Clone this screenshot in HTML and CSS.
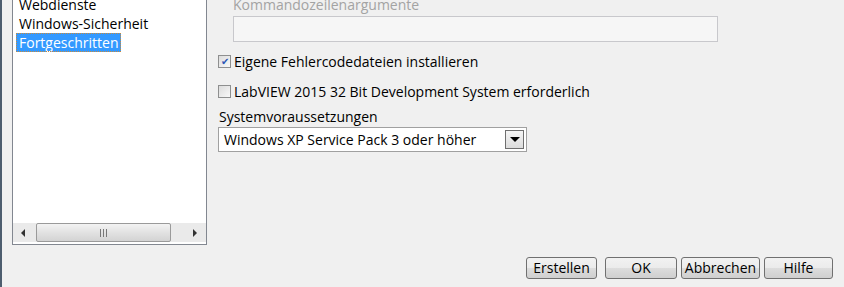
FILE: index.html
```html
<!DOCTYPE html>
<html>
<head>
<meta charset="UTF-8">
<title>Build-Spezifikation</title>
<link rel="stylesheet" href="styles.css">
</head>
<body>
<div id="win">
	<div class="main">
		<div class="side">
			<ul class="list">
				<li>Webdienste</li>
				<li>Windows-Sicherheit</li>
				<li class="sel"><span>Fortgeschritten</span></li>
			</ul>
			<div class="hscroll">
				<div class="arr left"></div>
				<div class="thumb"><span class="grip"></span></div>
				<div class="arr right"></div>
			</div>
		</div>

		<div class="panel">
			<div class="dis">Kommandozeilenargumente</div>
			<div class="field"></div>

			<label class="chk"><span class="box on">&#10004;</span>Eigene Fehlercodedateien installieren</label>
			<label class="chk second"><span class="box"></span>LabVIEW 2015 32 Bit Development System erforderlich</label>

			<div class="lbl">Systemvoraussetzungen</div>
			<div class="combo">
				<span>Windows XP Service Pack 3 oder höher</span>
				<div class="drop"><span class="tri"></span></div>
			</div>
		</div>
	</div>

	<div class="btns">
		<div class="btn b1">Erstellen</div>
		<div class="btn b2">OK</div>
		<div class="btn b3">Abbrechen</div>
		<div class="btn b4">Hilfe</div>
	</div>
</div>
</body>
</html>
```
FILE: styles.css
```css
body, div, ul, li{
	margin : 0;
	padding : 0;
}
body{
	background : #f0f0f0;
	font-family : "Open Sans", "Noto Sans", sans-serif;
	font-size : 14px;
	color : #000;
	overflow : hidden;
}
#win{
	width : 842px;
	height : 287px;
	border-left : 2px solid #4d5d6e;
	display : flex;
	flex-direction : column;
}
.main{
	display : flex;
	height : 245px;
}
/* 왼쪽 목록 */
.side{
	margin-left : 10px;
	margin-top : -8px;
	width : 193px;
	height : 251px;
	border : 1px solid #828790;
	background : #fff;
	display : flex;
	flex-direction : column;
}
.list{
	list-style : none;
	flex : 1;
	padding : 2px 0 0 3px;
}
.list li{
	height : 19px;
	line-height : 19px;
	padding-left : 3px;
}
.list .sel{
	padding-left : 0;
}
.list .sel span{
	display : inline-block;
	background : #3399ff;
	color : #fff;
	padding : 0 3px;
	outline : 1px dotted #c98a3a;
	outline-offset : -1px;
}
.hscroll{
	height : 19px;
	margin-bottom : 2px;
	display : flex;
	background : #eaeaea;
}
.arr{
	width : 23px;
	position : relative;
}
.arr.right{
	width : 35px;
}
.arr::after{
	content : "";
	position : absolute;
	top : 6px;
	border-top : 4px solid transparent;
	border-bottom : 4px solid transparent;
}
.arr.left::after{
	left : 8px;
	border-right : 4px solid #333;
}
.arr.right::after{
	left : 22px;
	border-left : 4px solid #333;
}
.thumb{
	flex : 1;
	border : 1px solid #9a9a9a;
	border-radius : 2px;
	background : linear-gradient(#f3f3f3, #e2e2e2 50%, #d3d3d3);
	display : flex;
	align-items : center;
	justify-content : center;
}
.grip{
	width : 7px;
	height : 8px;
	border-left : 1px solid #777;
	border-right : 1px solid #777;
	position : relative;
	box-sizing : border-box;
}
.grip::after{
	content : "";
	position : absolute;
	left : 2px;
	top : 0;
	height : 8px;
	border-left : 1px solid #777;
}
/* 오른쪽 설정 */
.panel{
	padding-left : 11px;
	flex : 1;
}
.dis{
	color : #a3a3a3;
	margin-left : 15px;
	margin-top : -6px;
	height : 22px;
	line-height : 22px;
}
.field{
	margin-left : 15px;
	width : 483px;
	height : 24px;
	border : 1px solid #c8c8cc;
	background : #f6f6f6;
}
.chk{
	display : flex;
	align-items : center;
	height : 20px;
	margin-top : 9px;
	white-space : nowrap;
}
.chk.second{
	margin-top : 10px;
}
.box{
	width : 11px;
	height : 11px;
	border : 1px solid #8e8f8f;
	background : linear-gradient(135deg, #dcdcdc, #f8f8f8);
	margin-right : 3px;
	font-size : 10px;
	line-height : 11px;
	text-align : center;
	color : #2a57b5;
	flex : none;
}
.lbl{
	margin-left : 1px;
	margin-top : 6px;
	height : 20px;
	line-height : 20px;
}
.combo{
	width : 307px;
	height : 23px;
	border : 1px solid #a0a0a0;
	background : #fff;
	display : flex;
	align-items : center;
	justify-content : space-between;
	padding-left : 5px;
	box-sizing : content-box;
	width : 302px;
}
.drop{
	width : 17px;
	height : 17px;
	border : 1px solid #6f6f6f;
	margin-right : 2px;
	background : linear-gradient(#f5f5f5, #dcdcdc);
	display : flex;
	align-items : center;
	justify-content : center;
}
.tri{
	border-left : 5px solid transparent;
	border-right : 5px solid transparent;
	border-top : 5px solid #000;
}
/* 아래 버튼 */
.btns{
	display : flex;
	margin-top : 12px;
	padding-left : 524px;
}
.btn{
	height : 20px;
	line-height : 20px;
	border : 1px solid #707070;
	border-radius : 3px;
	background : linear-gradient(#f2f2f2, #ebebeb 50%, #dddddd 50%, #cfcfcf);
	text-align : center;
	box-sizing : content-box;
}
.b1{ width : 69px; }
.b2{ width : 70px; margin-left : 8px; }
.b3{ width : 77px; margin-left : 4px; }
.b4{ width : 67px; margin-left : 4px; }
```
